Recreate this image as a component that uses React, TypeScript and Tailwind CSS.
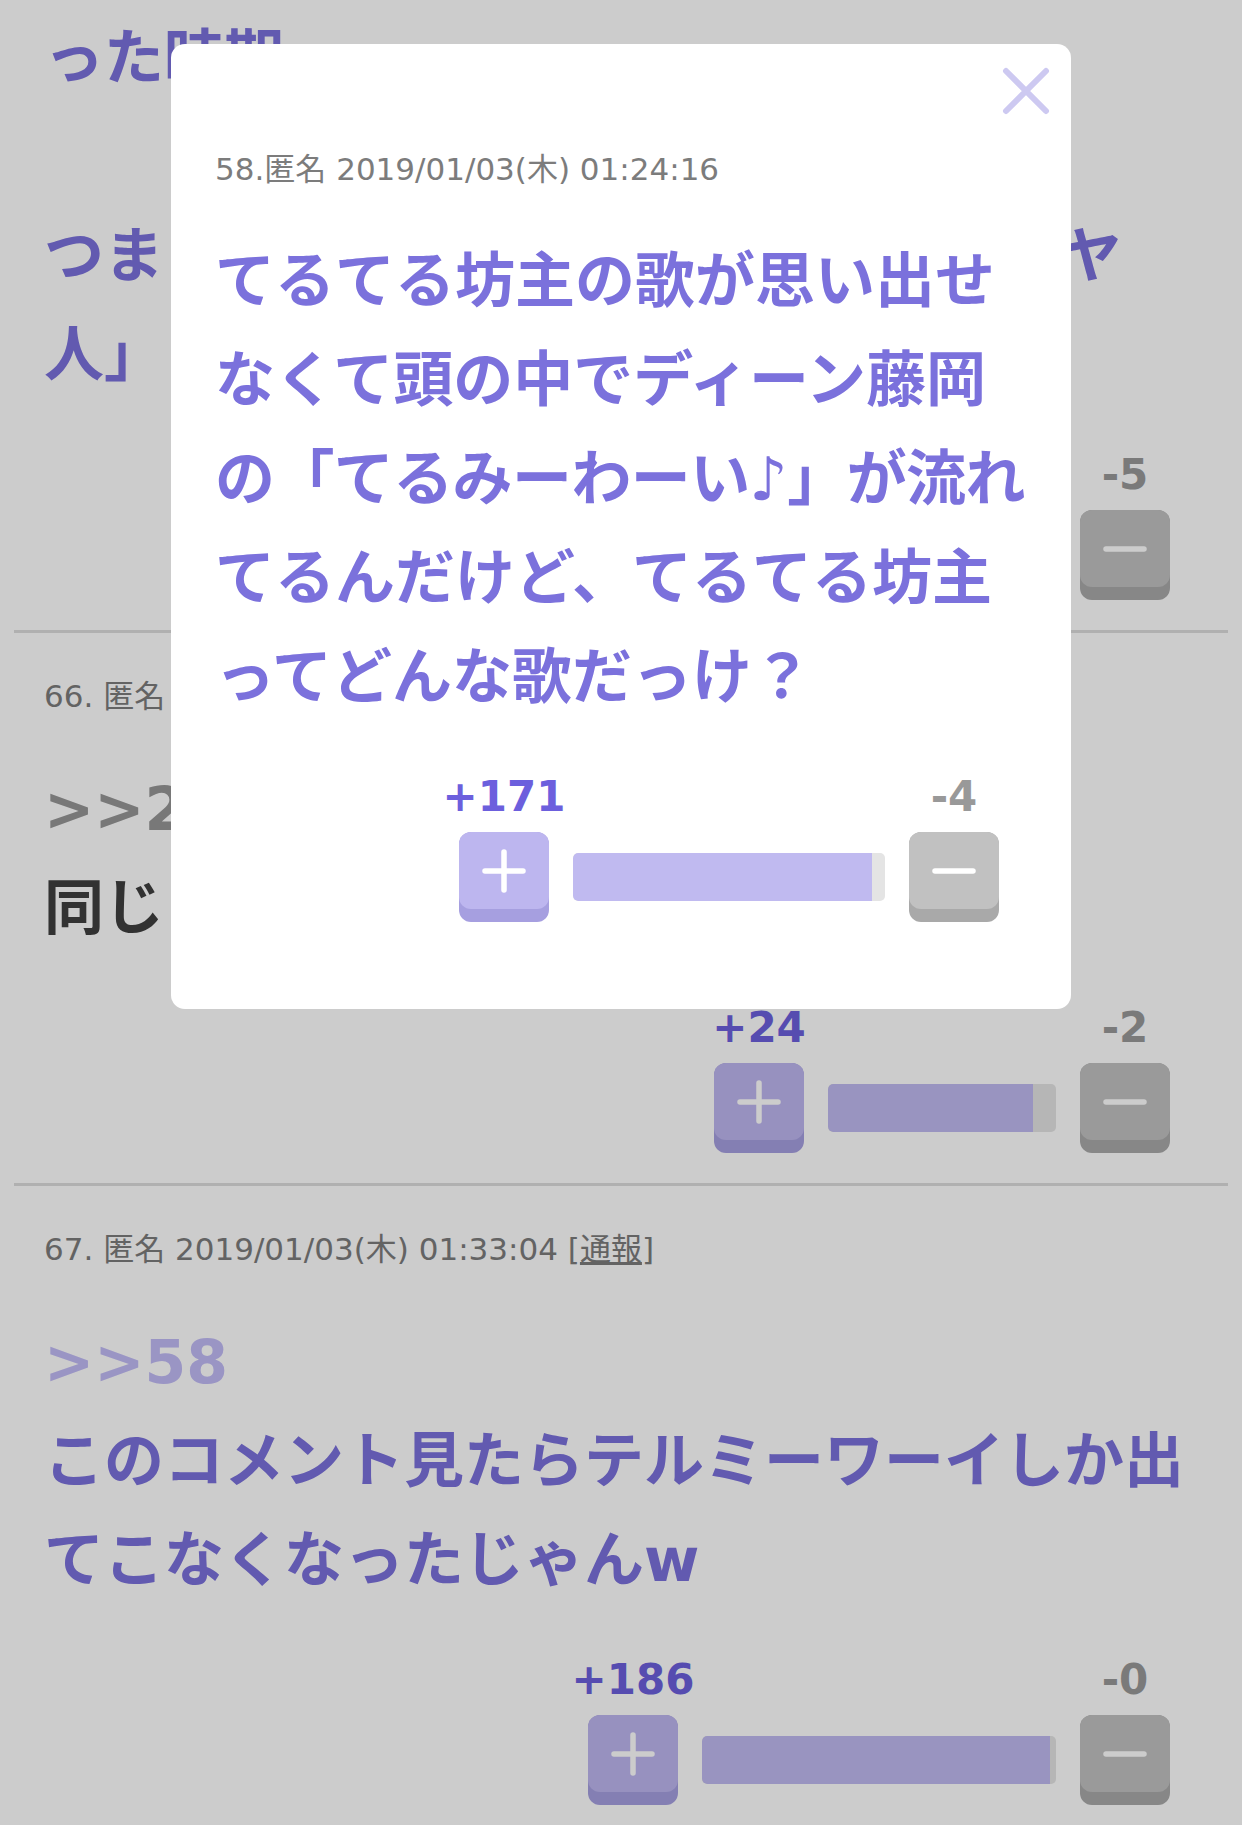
import React from "react";

const font = "font-['DejaVu_Sans','Noto_Sans_CJK_JP',sans-serif]";

type VoteProps = {
  plus: number;
  minus: number;
  bar: number;
};

const PlusIcon = () => (
  <svg width="44" height="44" viewBox="0 0 44 44" fill="none">
    <path d="M22 3v38M3 22h38" stroke="#fff" strokeWidth="5.5" strokeLinecap="round" />
  </svg>
);

const MinusIcon = () => (
  <svg width="44" height="44" viewBox="0 0 44 44" fill="none">
    <path d="M3 22h38" stroke="#fff" strokeWidth="5.5" strokeLinecap="round" />
  </svg>
);

const Vote = ({ plus, minus, bar }: VoteProps) => {
  const share = plus + minus === 0 ? 1 : plus / (plus + minus);

  return (
    <div className="mt-[45px] flex items-end justify-end gap-[24px] pr-[28px]">
      <div className="flex w-[90px] flex-col items-center">
        <span className="whitespace-nowrap text-[42px] font-bold leading-[50px] text-[#6c5fdd]">
          +{plus}
        </span>
        <button
          type="button"
          className="mt-[10px] h-[90px] w-[90px] rounded-[12px] bg-[#a69fe0] pb-[13px]"
        >
          <span className="flex h-full w-full items-center justify-center rounded-[12px] bg-[#bdb6ef]">
            <PlusIcon />
          </span>
        </button>
      </div>

      {/* the track keeps a thin grey end even at 100% */}
      <div
        className="mb-[21px] h-[48px] overflow-hidden rounded-[5px] bg-[#e4e4e4] pr-[6px]"
        style={{ width: bar }}
      >
        <div className="h-full rounded-l-[5px] bg-[#c0baf0]" style={{ width: `${share * 100}%` }} />
      </div>

      <div className="flex w-[90px] flex-col items-center">
        <span className="whitespace-nowrap text-[42px] font-bold leading-[50px] text-[#999999]">
          -{minus}
        </span>
        <button
          type="button"
          className="mt-[10px] h-[90px] w-[90px] rounded-[12px] bg-[#a9a9a9] pb-[13px]"
        >
          <span className="flex h-full w-full items-center justify-center rounded-[12px] bg-[#c1c1c1]">
            <MinusIcon />
          </span>
        </button>
      </div>
    </div>
  );
};

const Meta = ({ text, report }: { text: string; report?: boolean }) => (
  <p className="whitespace-nowrap text-[31px] leading-[40px] text-[#7c7c7c]">
    {text}
    {report && (
      <>
        {" "}[<span className="underline">通報</span>]
      </>
    )}
  </p>
);

const Lines = ({ lines, className }: { lines: string[]; className: string }) => (
  <>
    {lines.map((line, i) => (
      <span key={i} className={`block h-[99px] whitespace-nowrap ${className}`}>
        {line}
      </span>
    ))}
  </>
);

export default function App() {
  return (
    <div className={`relative min-h-[1825px] w-full overflow-hidden bg-white ${font}`}>
      <main>
        {/* 58 (scrolled, only the tail is on screen) */}
        <article className="mx-[14px] border-b-[3px] border-[#dcdcdc] px-[30px] pt-[9px] pb-[30px]">
          <div className="text-[60px] font-bold leading-[99px]">
            <Lines
              className="text-[#7b71dc]"
              lines={[
                "った時期",
                "",
                "つまり、てるてる坊主世代は全員「マヤ",
                "人」という事？",
              ]}
            />
          </div>
          <Vote plus={171} minus={5} bar={228} />
        </article>

        {/* 66 */}
        <article className="mx-[14px] border-b-[3px] border-[#dcdcdc] px-[30px] pt-[43px] pb-[30px]">
          <Meta text="66. 匿名 2019/01/03(木) 01:29:47" report />
          <div className="mt-[44px] text-[60px] font-bold leading-[99px]">
            <Lines className="text-[#969696]" lines={[">>21"]} />
            <Lines className="text-[#3f3f3f]" lines={["同じく頭の中で流れてた"]} />
          </div>
          <Vote plus={24} minus={2} bar={228} />
        </article>

        {/* 67 */}
        <article className="mx-[14px] px-[30px] pt-[43px] pb-[30px]">
          <Meta text="67. 匿名 2019/01/03(木) 01:33:04" report />
          <div className="mt-[44px] text-[60px] font-bold leading-[99px]">
            <Lines className="text-[#c1bbf6]" lines={[">>58"]} />
            <Lines
              className="text-[#7b71dc]"
              lines={["このコメント見たらテルミーワーイしか出", "てこなくなったじゃんw"]}
            />
          </div>
          <Vote plus={186} minus={0} bar={354} />
        </article>
      </main>

      {/* anchor popup */}
      <div className="fixed inset-0 flex items-start justify-center bg-black/20 pt-[44px]">
        <div className="relative w-[900px] rounded-[14px] bg-white px-[44px] pt-[105px] pb-[87px]">
          <button type="button" className="absolute right-[20px] top-[22px]" aria-label="閉じる">
            <svg width="50" height="50" viewBox="0 0 50 50" fill="none">
              <path
                d="M5 5l40 40M45 5L5 45"
                stroke="#cdc9f1"
                strokeWidth="6"
                strokeLinecap="round"
              />
            </svg>
          </button>

          <Meta text="58.匿名 2019/01/03(木) 01:24:16" />
          <div className="mt-[43px] text-[60px] font-bold leading-[99px]">
            <Lines className="text-[#7b71dc]" lines={["てるてる坊主の歌が思い出せ", "なくて頭の中でディーン藤岡"]} />
            <Lines className="tracking-[-0.6px] text-[#7b71dc]" lines={["の「てるみーわーい♪」が流れ"]} />
            <Lines className="text-[#7b71dc]" lines={["てるんだけど、てるてる坊主", "ってどんな歌だっけ？"]} />
          </div>
          <Vote plus={171} minus={4} bar={312} />
        </div>
      </div>
    </div>
  );
}
